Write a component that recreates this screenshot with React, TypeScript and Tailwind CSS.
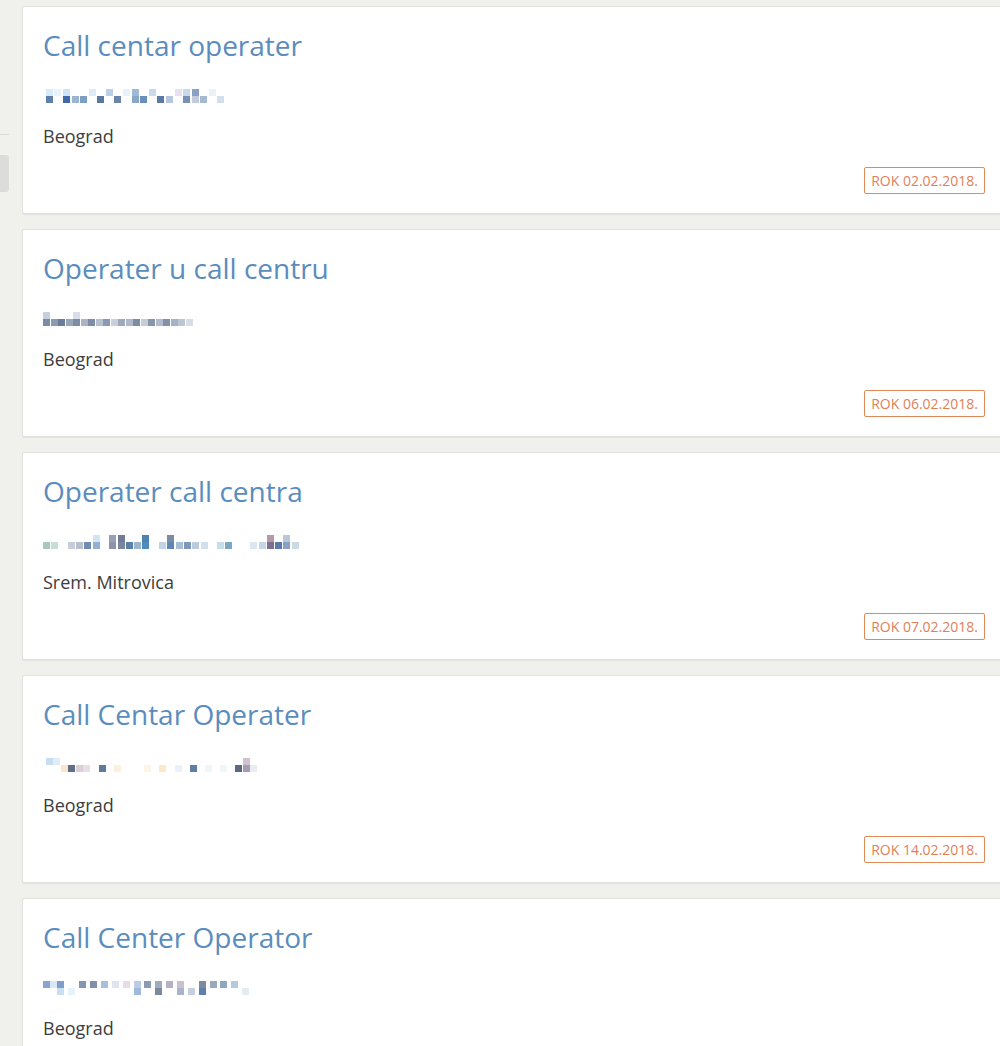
import React from "react";

type Block = [number, number, string];

function Mosaic({ blocks, width, target }: { blocks: Block[]; width: number; target: number }) {
  const k = target / width;
  return (
    <svg width={target} height={16} viewBox={`0 0 ${target} 16`} className="block">
      {blocks.map(([x, y, c], i) => (
        <rect key={i} x={Math.round(x * k)} y={y === 2 ? 1 : 8} width={7} height={7} fill={c} />
      ))}
    </svg>
  );
}

const m1: Block[] = [
  [2, 2, "#d7ecfb"], [8, 2, "#e6f3fb"], [2, 9, "#5d7fa8"], [14, 2, "#cfe4f6"], [14, 9, "#3f6aa6"], [20, 9, "#9db6cf"], [26, 9, "#7f9fc2"], [32, 2, "#dcecf8"],
  [38, 9, "#5a77a0"], [44, 2, "#b9cfe9"], [50, 9, "#6a84aa"], [56, 2, "#e8f2fb"], [62, 2, "#9fb9d8"], [62, 9, "#8aa7c8"], [68, 9, "#6b8ebc"], [74, 2, "#c8dbee"],
  [80, 9, "#5b7aa6"], [86, 9, "#b7c8dc"], [92, 2, "#e6e0f0"], [98, 2, "#c9d7ea"], [98, 9, "#7890b8"], [104, 2, "#8aa0c4"], [104, 9, "#c4c9dc"], [110, 9, "#a4bad2"],
  [116, 2, "#eaf1f8"], [122, 9, "#d2e0ee"],
];

const m2: Block[] = [
  [0, 2, "#c6cfdc"], [0, 9, "#7d8ca4"], [6, 9, "#8d99ae"], [12, 9, "#6b7c98"], [18, 9, "#9aa7bb"], [24, 2, "#d9dfe8"], [24, 9, "#7e8ca6"], [30, 9, "#aab4c5"],
  [36, 9, "#7f8ea8"], [42, 9, "#b6c0cf"], [48, 9, "#8c99b2"], [54, 9, "#c9d0dc"], [60, 9, "#9fa9bc"], [66, 9, "#aeb8c8"], [72, 9, "#7d8ba6"], [78, 9, "#c4ccd8"],
  [84, 9, "#8896ac"], [90, 9, "#b2bccc"], [96, 9, "#8491a8"], [102, 9, "#a6b1c2"], [108, 9, "#bcc5d2"], [114, 9, "#d7dde6"],
];

const m3: Block[] = [
  [0, 9, "#a9c7c0"], [6, 9, "#c7ddd8"], [18, 9, "#c7ced9"], [24, 9, "#b7c0cc"], [30, 9, "#6f8db4"], [36, 2, "#d0e4f2"], [36, 9, "#94b0d0"],
  [48, 2, "#9aa0b4"], [48, 9, "#8d93aa"], [54, 2, "#6f7e96"], [54, 9, "#7a869c"], [60, 9, "#5a7fa8"], [66, 9, "#9fb5cc"], [72, 2, "#4f82b0"], [72, 9, "#4d8cbd"],
  [84, 9, "#c1d3e4"], [90, 2, "#7c8ca4"], [90, 9, "#5e86b6"], [96, 9, "#a9bed4"], [102, 9, "#7e98ba"], [108, 9, "#b9cbdc"], [114, 9, "#d2e0ec"], [126, 9, "#c5dfe6"],
  [132, 9, "#7aa7c4"], [150, 9, "#dce6f0"], [156, 9, "#c6d6e6"], [162, 2, "#b49aa8"], [162, 9, "#7d6f90"], [168, 9, "#5b7ba8"], [174, 2, "#b8c8dc"], [174, 9, "#8aa2c4"],
  [180, 9, "#ccdae8"],
];

const m4: Block[] = [
  [2, 2, "#c9dcf4"], [8, 2, "#e2ecf8"], [14, 9, "#fbe6cc"], [20, 9, "#5f6f88"], [26, 9, "#d9cfd9"], [32, 9, "#e9dde6"], [44, 9, "#5f7a9a"], [56, 9, "#fdf0dc"],
  [80, 9, "#fdf5e6"], [92, 9, "#fde8c8"], [104, 9, "#e8f2f8"], [116, 9, "#5c7fa4"], [128, 9, "#eef6f8"], [140, 9, "#f0f6fa"], [152, 9, "#5d6984"], [158, 2, "#cfc3d3"], [158, 9, "#a89cb0"],
  [164, 9, "#e8ecf4"],
];

const m5: Block[] = [
  [0, 2, "#8ba4cc"], [4, 2, "#d7e8f6"], [8, 2, "#7f9fc8"], [8, 9, "#c9def0"], [14, 9, "#e4f2fa"], [20, 2, "#8595b0"], [26, 2, "#7f90ac"], [32, 2, "#a7c0e0"],
  [38, 2, "#dfe4f0"], [44, 2, "#e8dce8"], [50, 2, "#b9cde4"], [50, 9, "#9fb9d6"], [56, 2, "#8b9bb6"], [62, 2, "#a0aac0"], [62, 9, "#7b889e"], [68, 2, "#b8b0c4"],
  [74, 2, "#c9c0d0"], [74, 9, "#a9b4c8"], [80, 9, "#c6d0dc"], [86, 2, "#7e8aa2"], [86, 9, "#5e80b0"], [92, 2, "#9aa8bc"], [98, 2, "#8fa6c0"], [104, 2, "#b6c9de"],
  [110, 9, "#e4ecf2"],
];

type Job = { title: string; city: string; date: string; mosaic: Block[]; mw: number; tw: number };

const jobs: Job[] = [
  { title: "Call centar operater", city: "Beograd", date: "02.02.2018.", mosaic: m1, mw: 128, tw: 183 },
  { title: "Operater u call centru", city: "Beograd", date: "06.02.2018.", mosaic: m2, mw: 120, tw: 150 },
  { title: "Operater call centra", city: "Srem. Mitrovica", date: "07.02.2018.", mosaic: m3, mw: 186, tw: 257 },
  { title: "Call Centar Operater", city: "Beograd", date: "14.02.2018.", mosaic: m4, mw: 170, tw: 215 },
  { title: "Call Center Operator", city: "Beograd", date: "", mosaic: m5, mw: 116, tw: 210 },
];

export default function App() {
  return (
    <div className="h-[1046px] w-[1000px] overflow-hidden bg-[#f0f0ec] flex" style={{ fontFamily: "'Open Sans', sans-serif" }}>
      <div className="w-[22px] shrink-0 flex flex-col pt-[134px]">
        <div className="h-px w-[9px] bg-[#dcdcd8]" />
        <div className="mt-[20px] h-[37px] w-[9px] rounded-r-[3px] bg-[#dcdcda]" />
      </div>
      <div className="flex-1 flex flex-col gap-[15px] pt-[6px] -mr-[4px]">
        {jobs.map((j, i) => (
          <div
            key={i}
            className="h-[208px] shrink-0 bg-white border border-[#e1e1de] rounded-[2px] shadow-[0_1px_1px_rgba(0,0,0,0.06)] pl-[20px] pr-[18px] pt-[24px] flex flex-col"
          >
            <div className="text-[28px] leading-[28px] text-[#5a8dbd] whitespace-nowrap">{j.title}</div>
            <div className="mt-[29px]">
              <Mosaic blocks={j.mosaic} width={j.mw} target={j.tw} />
            </div>
            <div className="mt-[22px] text-[18px] leading-[20px] text-[#3d3d3d]">{j.city}</div>
            {j.date && (
              <div className="mt-auto mb-[19px] self-end border border-[#e08a58] rounded-[2px] px-[6px] h-[27px] flex items-center text-[14px] text-[#e0805a] whitespace-nowrap">
                ROK {j.date}
              </div>
            )}
          </div>
        ))}
      </div>
    </div>
  );
}
